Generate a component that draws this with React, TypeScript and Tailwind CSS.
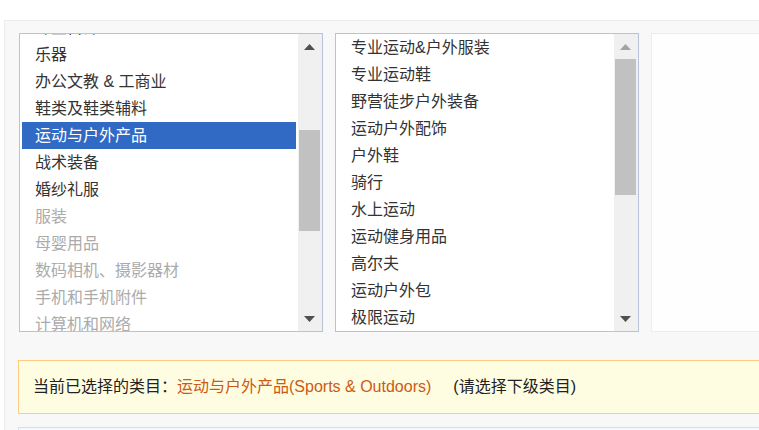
import React from "react";

type Item = { label: string; kind?: "sel" | "dim" };

const list1: Item[] = [
  { label: "珠宝首饰" },
  { label: "乐器" },
  { label: "办公文教 & 工商业" },
  { label: "鞋类及鞋类辅料" },
  { label: "运动与户外产品", kind: "sel" },
  { label: "战术装备" },
  { label: "婚纱礼服" },
  { label: "服装", kind: "dim" },
  { label: "母婴用品", kind: "dim" },
  { label: "数码相机、摄影器材", kind: "dim" },
  { label: "手机和手机附件", kind: "dim" },
  { label: "计算机和网络", kind: "dim" },
];

const list2: Item[] = [
  { label: "专业运动&户外服装" },
  { label: "专业运动鞋" },
  { label: "野营徒步户外装备" },
  { label: "运动户外配饰" },
  { label: "户外鞋" },
  { label: "骑行" },
  { label: "水上运动" },
  { label: "运动健身用品" },
  { label: "高尔夫" },
  { label: "运动户外包" },
  { label: "极限运动" },
];

function Arrow({ dir, disabled }: { dir: "up" | "down"; disabled?: boolean }) {
  const fill = disabled ? "#a3a3a3" : "#505050";
  return (
    <svg width="11" height="6" viewBox="0 0 11 6">
      {dir === "up" ? (
        <polygon points="0,6 5.5,0 11,6" fill={fill} />
      ) : (
        <polygon points="0,0 11,0 5.5,6" fill={fill} />
      )}
    </svg>
  );
}

function Scrollbar({ thumbClass, upDisabled }: { thumbClass: string; upDisabled?: boolean }) {
  return (
    <div className="flex w-[24px] shrink-0 flex-col bg-[#f0f0f0]">
      <div className="flex h-[25px] items-center justify-center pr-[1px]">
        <Arrow dir="up" disabled={upDisabled} />
      </div>
      <div className="flex-1">
        <div className={`ml-[1px] mr-[2px] bg-[#c1c1c1] ${thumbClass}`} />
      </div>
      <div className="flex h-[24px] items-center justify-center pr-[1px]">
        <Arrow dir="down" />
      </div>
    </div>
  );
}

function ListBox({
  items,
  thumbClass,
  upDisabled,
  offsetClass,
}: {
  items: Item[];
  thumbClass: string;
  upDisabled?: boolean;
  offsetClass: string;
}) {
  return (
    <div className="flex h-[299px] w-[304px] shrink-0 border border-[#b7c3d7] bg-white">
      <div className="flex-1 overflow-hidden px-[2px]">
        <div className={offsetClass}>
          {items.map((it, i) => (
            <div
              key={i}
              className={
                "h-[27px] whitespace-nowrap pl-[13px] text-[16px] leading-[27px] " +
                (it.kind === "sel"
                  ? "bg-[#316ac5] text-white"
                  : it.kind === "dim"
                  ? "text-[#ababab]"
                  : "text-[#333333]")
              }
            >
              {it.label}
            </div>
          ))}
        </div>
      </div>
      <Scrollbar thumbClass={thumbClass} upDisabled={upDisabled} />
    </div>
  );
}

export default function App() {
  return (
    <div className="h-[430px] w-[759px] overflow-hidden bg-white font-['Liberation_Sans','Noto_Sans_CJK_SC',sans-serif]">
      <div className="h-[20px]" />
      <div className="ml-[4px] h-[410px] w-[900px] border-l border-t border-[#ebebeb] bg-[#f8f8f8] pl-[14px] pt-[12px]">
        <div className="flex gap-[12px]">
          <ListBox items={list1} thumbClass="mt-[71px] h-[101px]" offsetClass="-mt-[20px]" />
          <ListBox items={list2} thumbClass="mt-0 h-[136px]" upDisabled offsetClass="mt-0" />
          <div className="h-[299px] w-[300px] shrink-0 border border-[#ececec] bg-[#fefefe]" />
        </div>
        <div className="-ml-[1px] mt-[28px] flex h-[54px] w-[820px] items-center border border-[#ffcb7f] bg-[#fffde1] pl-[14px] text-[16px]">
          <span className="text-[#222222]">当前已选择的类目：</span>
          <span className="text-[#cc5a14]">运动与户外产品(Sports &amp; Outdoors)</span>
          <span className="ml-[22px] text-[#222222]">(请选择下级类目)</span>
        </div>
        <div className="-ml-[1px] mt-[13px] h-[40px] w-[820px] border border-[#cfdff5] bg-[#f5f9fe]" />
      </div>
    </div>
  );
}
